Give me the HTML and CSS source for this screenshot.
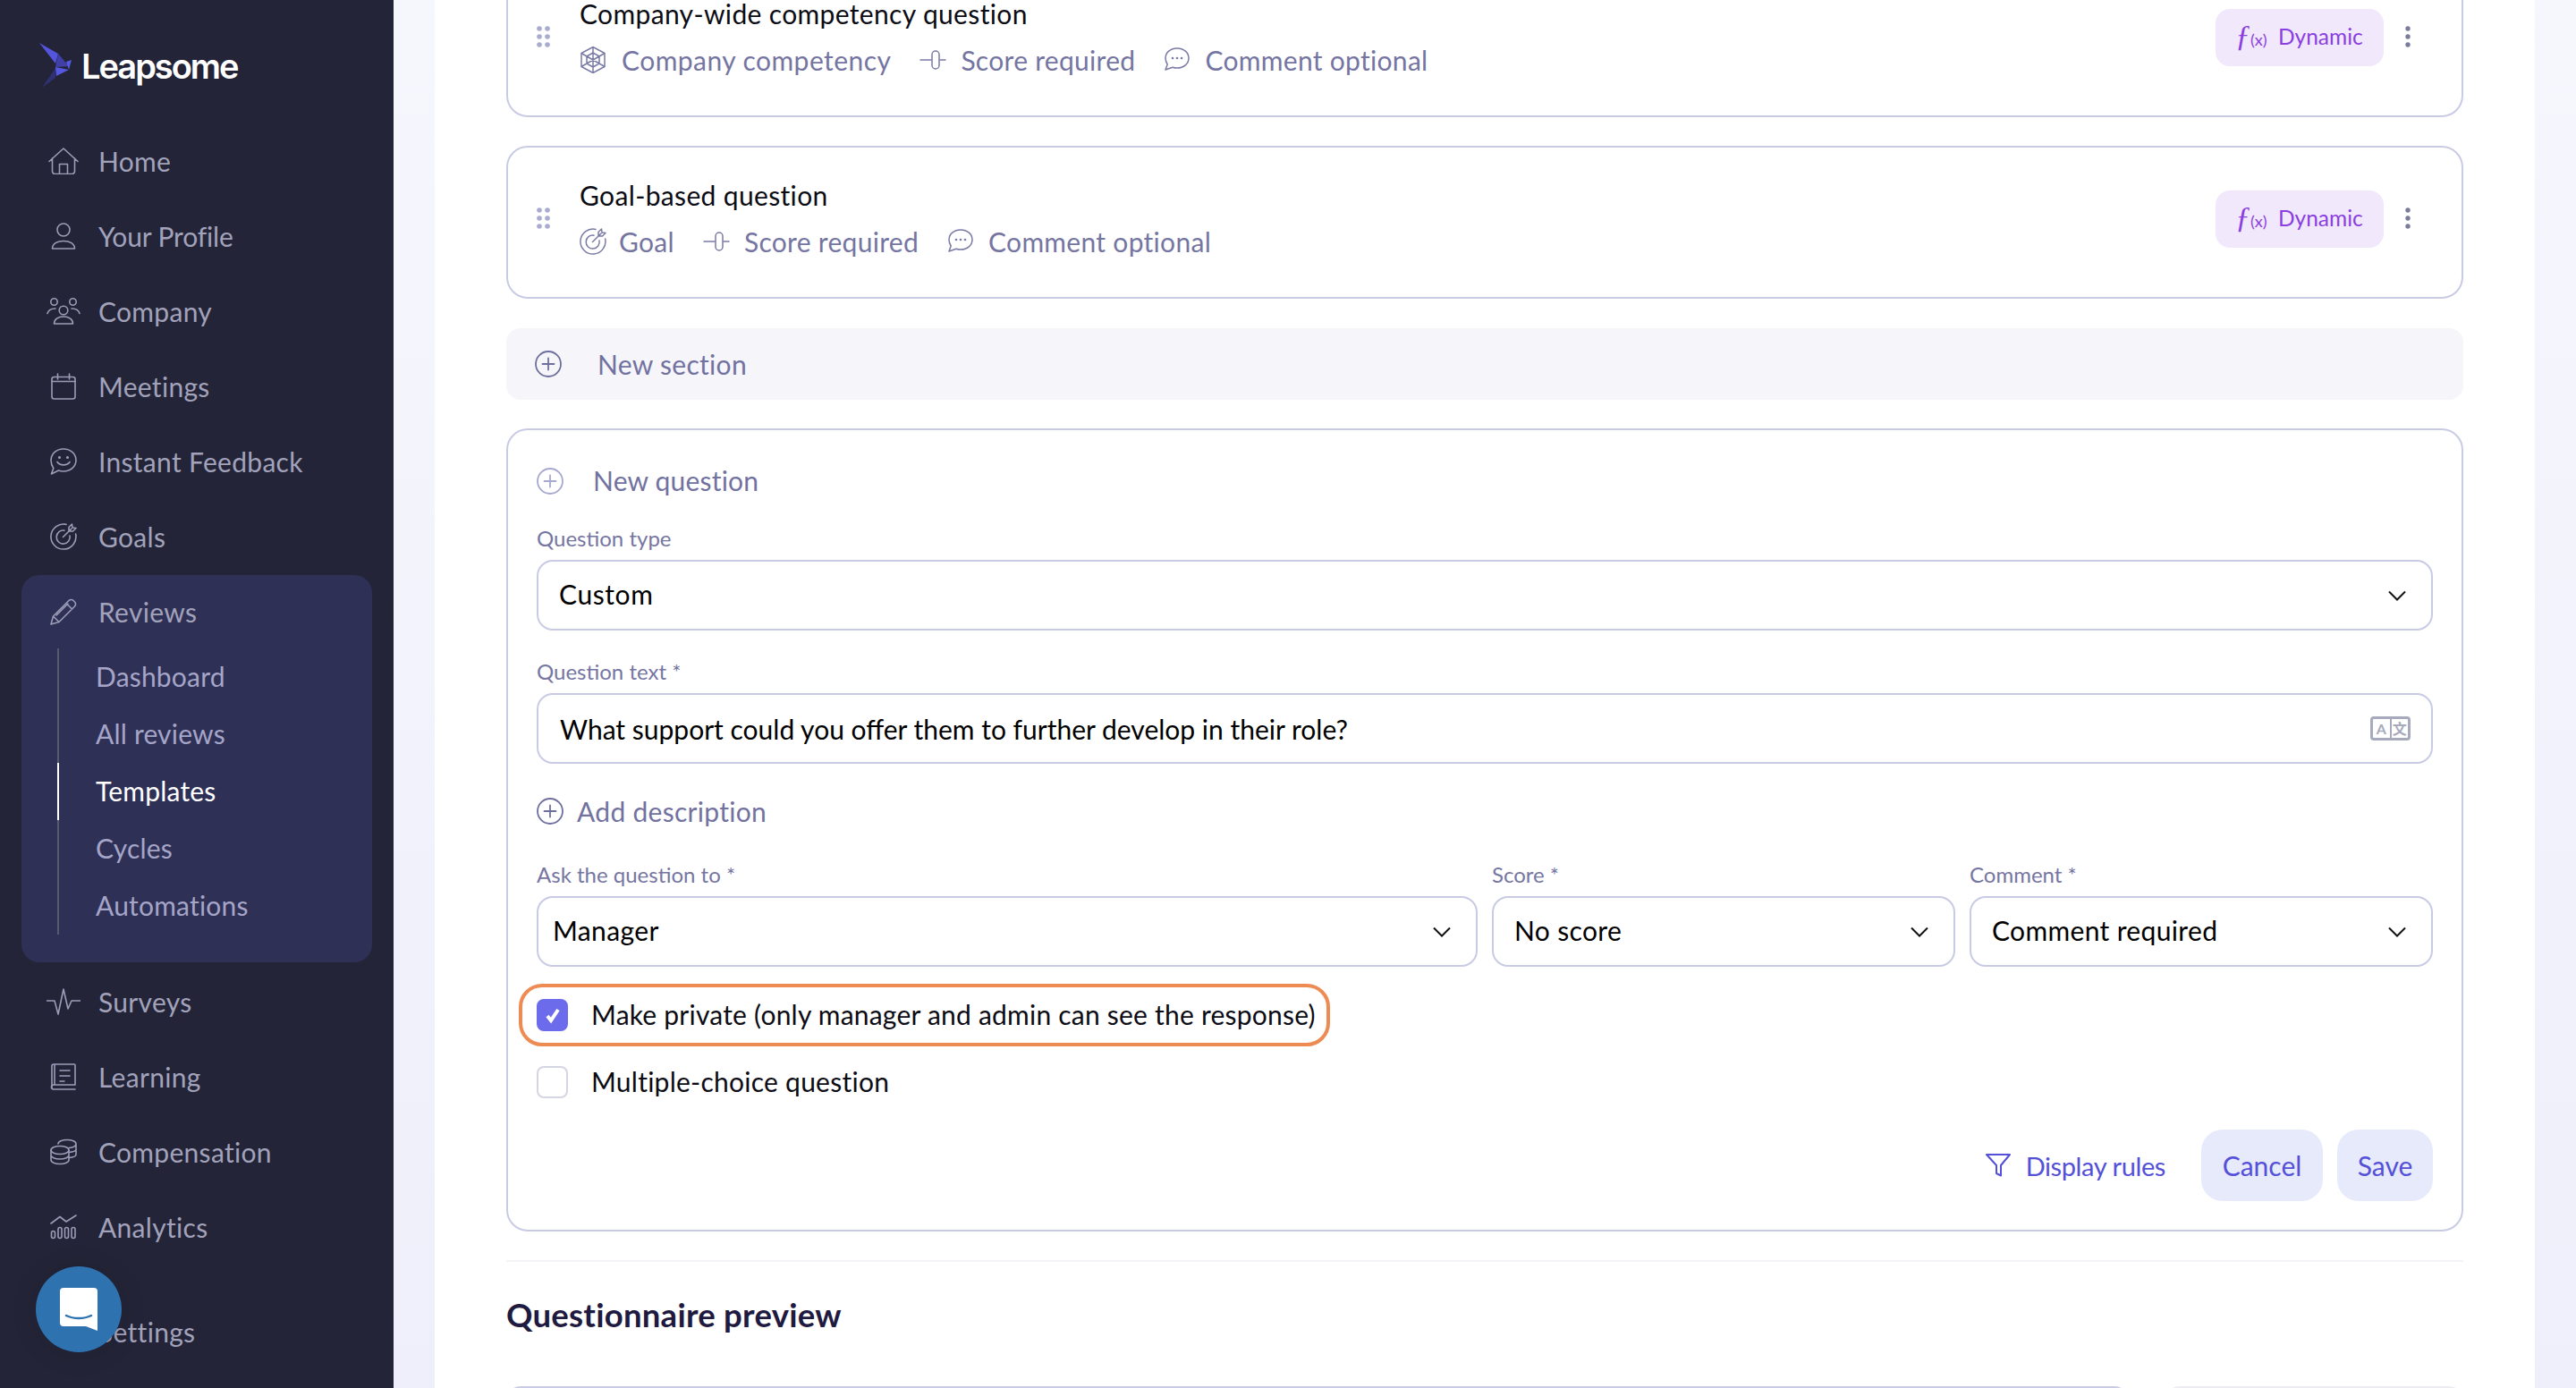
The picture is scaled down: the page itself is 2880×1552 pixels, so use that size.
FILE: index.html
```html
<!DOCTYPE html>
<html lang="en">
<head>
<meta charset="utf-8">
<title>Leapsome</title>
<link rel="stylesheet" href="styles.css">
</head>
<body>
<svg class="defs" width="0" height="0" aria-hidden="true">
  <symbol id="i-home" viewBox="0 0 34 30"><path d="M1 15.500 17 1l16 14.500M4.500 12v14.500a3 3 0 0 0 3 3h19a3 3 0 0 0 3-3V12M12.500 29V18.500h9V29"/></symbol>
  <symbol id="i-user" viewBox="0 0 30 30"><circle cx="15" cy="8" r="7"/><path d="M2.500 29c0-5.500 5.500-8.500 12.500-8.500s12.500 3 12.500 8.500z"/></symbol>
  <symbol id="i-team" viewBox="0 0 38 30"><circle cx="19" cy="14" r="4.800"/><circle cx="8.500" cy="4.500" r="3.700"/><circle cx="29.500" cy="4.500" r="3.700"/><path d="M8.500 29c0-5 4.500-8 10.500-8s10.500 3 10.500 8zM1 17.500c1-3.500 4.500-5.500 9-5.500M37 17.500c-1-3.500-4.500-5.500-9-5.500"/></symbol>
  <symbol id="i-cal" viewBox="0 0 30 30"><rect x="2" y="4.500" width="26" height="24.500" rx="2.500"/><path d="M2 9.500h26M8.500 1v6M21.500 1v6"/></symbol>
  <symbol id="i-chat" viewBox="0 0 30 30"><path d="M15 1c8 0 14 5.500 14 12.500S23 26 15 26c-2 0-4-.3-5.500-1L1.500 29l2.300-6.500C2 20 1 17 1 13.500 1 6.500 7 1 15 1z"/><circle cx="10.500" cy="10.500" r=".8"/><circle cx="19.500" cy="10.500" r=".8"/><path d="M8 15.500c3 4.500 11 4.500 14 0"/></symbol>
  <symbol id="i-bubble" viewBox="0 0 30 30"><path d="M15 2c7.500 0 13 4.800 13 11s-5.500 11-13 11c-1.800 0-3.500-.3-5-.8L2 26l2.200-6C3 18 2 15.700 2 13 2 6.800 7.500 2 15 2z"/><circle cx="10" cy="13" r=".6"/><circle cx="15" cy="13" r=".6"/><circle cx="20" cy="13" r=".6"/></symbol>
  <symbol id="i-goal" viewBox="0 0 30 30"><path d="M18 1.400A14 14 0 1 0 28.600 12"/><path d="M16 8.200A7.500 7.500 0 1 0 22 14"/><path d="M14.500 15.500 24 6M21 9V4.500L24.500 1l.5 4 4 .5L25.500 9z"/></symbol>
  <symbol id="i-pencil" viewBox="0 0 30 30"><path d="M1 29l2.500-9L21 2.500a3.500 3.500 0 0 1 5 0l1.500 1.500a3.500 3.500 0 0 1 0 5L10 26.500zM3.500 20l6.500 6.500M18 5.500 24.500 12M7 19 20 6"/></symbol>
  <symbol id="i-pulse" viewBox="0 0 38 30"><path d="M0 14h9l4 15 6-28 5 22 4-9h10"/></symbol>
  <symbol id="i-book" viewBox="0 0 30 30"><path d="M5 24V1h22a1 1 0 0 1 1 1v22zM5 24H4a2.500 2.500 0 0 0 0 5h24M2 27V3a2 2 0 0 1 2-2h1M11 8h11M11 14h11M11 20h5"/></symbol>
  <symbol id="i-coins" viewBox="0 0 30 30"><ellipse cx="11" cy="13" rx="10" ry="4.500"/><path d="M1 13v11c0 2.500 4.500 4.500 10 4.500s10-2 10-4.500V13M1 18.500c0 2.500 4.500 4.500 10 4.500s10-2 10-4.500"/><path d="M9 6c0-2.500 4.500-4.500 10-4.500S29 3.500 29 6s-3 4-8 4.500M29 6v12c0 1.800-3 3-8 3.500M29 12c0 1.800-3 3-8 3.500"/></symbol>
  <symbol id="i-chart" viewBox="0 0 30 28"><path d="M1 10 11 2.500 18 8 29 1"/><rect x="1.500" y="18.500" width="4" height="8" rx="2"/><rect x="9" y="14.500" width="4" height="12" rx="2"/><rect x="16.500" y="14.500" width="4" height="12" rx="2"/><rect x="24" y="14.500" width="4" height="12" rx="2"/></symbol>
  <symbol id="i-gear" viewBox="0 0 30 30"><circle cx="15" cy="15" r="5"/><circle cx="15" cy="15" r="12"/></symbol>
  <symbol id="i-web" viewBox="0 0 30 30"><path d="M15 .5 28 7.500v15L15 29.500 2 22.500v-15zM15 7 22 11v8l-7 4-7-4v-8zM15 .5v29M2 7.500l26 15M28 7.500 2 22.500"/></symbol>
  <symbol id="i-score" viewBox="0 0 30 30"><path d="M1 15h12M23 15h6"/><rect x="14" y="5" width="8" height="20" rx="4"/></symbol>
  <symbol id="i-plus" viewBox="0 0 30 30"><circle cx="15" cy="15" r="14"/><path d="M15 8.500v13M8.500 15h13"/></symbol>
  <symbol id="i-chev" viewBox="0 0 20 12"><path d="M1 1.500 10 10.500 19 1.500"/></symbol>
  <symbol id="i-filter" viewBox="0 0 28 26"><path d="M1 1h26L17 13v11.500l-5-2.500v-9z"/></symbol>
</svg>

<div class="app">
  <aside class="sidebar">
    <header class="brand">
      <svg class="bird" viewBox="0 0 36 50" aria-hidden="true">
        <polygon points="0,0 21,12 18,23" fill="#5356dc"/>
        <polygon points="21,12 33,26 18,27" fill="#4040a8"/>
        <polygon points="30,21 36,19 33,30" fill="#5558e0"/>
        <polygon points="18,27 33,30 19,37" fill="#5558e0"/>
        <polygon points="18,28 18,39 3,50" fill="#303074"/>
      </svg>
      <span class="brand-name">Leapsome</span>
    </header>
    <nav class="nav">
      <a class="nav-item"><span class="nav-icon"><svg class="ic home"><use href="#i-home"/></svg></span>Home</a>
      <a class="nav-item profile"><span class="nav-icon"><svg class="ic"><use href="#i-user"/></svg></span>Your Profile</a>
      <a class="nav-item"><span class="nav-icon"><svg class="ic wide"><use href="#i-team"/></svg></span>Company</a>
      <a class="nav-item"><span class="nav-icon"><svg class="ic"><use href="#i-cal"/></svg></span>Meetings</a>
      <a class="nav-item"><span class="nav-icon"><svg class="ic"><use href="#i-chat"/></svg></span>Instant Feedback</a>
      <a class="nav-item"><span class="nav-icon"><svg class="ic"><use href="#i-goal"/></svg></span>Goals</a>
      <div class="nav-group">
        <a class="nav-item"><span class="nav-icon"><svg class="ic"><use href="#i-pencil"/></svg></span>Reviews</a>
        <ul class="sub-nav">
          <li>Dashboard</li>
          <li>All reviews</li>
          <li class="active">Templates</li>
          <li>Cycles</li>
          <li>Automations</li>
        </ul>
      </div>
      <a class="nav-item"><span class="nav-icon"><svg class="ic wide"><use href="#i-pulse"/></svg></span>Surveys</a>
      <a class="nav-item"><span class="nav-icon"><svg class="ic"><use href="#i-book"/></svg></span>Learning</a>
      <a class="nav-item"><span class="nav-icon"><svg class="ic"><use href="#i-coins"/></svg></span>Compensation</a>
      <a class="nav-item"><span class="nav-icon"><svg class="ic"><use href="#i-chart"/></svg></span>Analytics</a>
      <a class="nav-item settings"><span class="nav-icon"><svg class="ic"><use href="#i-gear"/></svg></span>Settings</a>
    </nav>
    <button class="chat-launcher" aria-label="Chat">
      <svg viewBox="0 0 42 48" width="42" height="48" aria-hidden="true">
        <path fill="#fff" d="M4 0h34a4 4 0 0 1 4 4v44l-13-5H4a4 4 0 0 1-4-4V4a4 4 0 0 1 4-4z"/>
        <path fill="none" stroke="#2f72b0" stroke-width="2.500" stroke-linecap="round" d="M7 31c8 4 20 4 28 0"/>
      </svg>
    </button>
  </aside>

  <main class="stage">
    <div class="panel">
      <article class="card q-card">
        <svg class="grip" viewBox="0 0 15 24" aria-hidden="true"><circle cx="3" cy="3" r="2.800"/><circle cx="12" cy="3" r="2.800"/><circle cx="3" cy="12" r="2.800"/><circle cx="12" cy="12" r="2.800"/><circle cx="3" cy="21" r="2.800"/><circle cx="12" cy="21" r="2.800"/></svg>
        <div class="q-body">
          <h3 class="q-title">Company-wide competency question</h3>
          <div class="q-meta">
            <span class="meta competency"><svg class="ic meta-ic"><use href="#i-web"/></svg>Company competency</span>
            <span class="meta"><svg class="ic meta-ic"><use href="#i-score"/></svg>Score required</span>
            <span class="meta"><svg class="ic meta-ic"><use href="#i-bubble"/></svg>Comment optional</span>
          </div>
        </div>
        <span class="badge"><span class="fx"><i>ƒ</i><small>(x)</small></span>Dynamic</span>
        <svg class="kebab" viewBox="0 0 6 24" aria-hidden="true"><circle cx="3" cy="3" r="2.700"/><circle cx="3" cy="12" r="2.700"/><circle cx="3" cy="21" r="2.700"/></svg>
      </article>

      <article class="card q-card">
        <svg class="grip" viewBox="0 0 15 24" aria-hidden="true"><circle cx="3" cy="3" r="2.800"/><circle cx="12" cy="3" r="2.800"/><circle cx="3" cy="12" r="2.800"/><circle cx="12" cy="12" r="2.800"/><circle cx="3" cy="21" r="2.800"/><circle cx="12" cy="21" r="2.800"/></svg>
        <div class="q-body">
          <h3 class="q-title">Goal-based question</h3>
          <div class="q-meta">
            <span class="meta goal"><svg class="ic meta-ic"><use href="#i-goal"/></svg>Goal</span>
            <span class="meta"><svg class="ic meta-ic"><use href="#i-score"/></svg>Score required</span>
            <span class="meta"><svg class="ic meta-ic"><use href="#i-bubble"/></svg>Comment optional</span>
          </div>
        </div>
        <span class="badge"><span class="fx"><i>ƒ</i><small>(x)</small></span>Dynamic</span>
        <svg class="kebab" viewBox="0 0 6 24" aria-hidden="true"><circle cx="3" cy="3" r="2.700"/><circle cx="3" cy="12" r="2.700"/><circle cx="3" cy="21" r="2.700"/></svg>
      </article>

      <div class="new-section"><svg class="ic plus"><use href="#i-plus"/></svg>New section</div>

      <section class="card form-card">
        <div class="new-question"><svg class="ic plus soft"><use href="#i-plus"/></svg><span class="lift">New question</span></div>

        <div class="field first">
          <label class="label">Question type</label>
          <div class="control custom"><span>Custom</span><svg class="chev"><use href="#i-chev"/></svg></div>
        </div>

        <div class="field second">
          <label class="label">Question text *</label>
          <div class="control text-input"><span>What support could you offer them to further develop in their role?</span>
            <span class="translate"><b>A</b><b class="cjk">文</b></span>
          </div>
        </div>

        <div class="add-description"><svg class="ic plus"><use href="#i-plus"/></svg>Add description</div>

        <div class="field-row">
          <div class="field">
            <label class="label">Ask the question to *</label>
            <div class="control tight"><span>Manager</span><svg class="chev"><use href="#i-chev"/></svg></div>
          </div>
          <div class="field">
            <label class="label">Score *</label>
            <div class="control"><span>No score</span><svg class="chev"><use href="#i-chev"/></svg></div>
          </div>
          <div class="field">
            <label class="label">Comment *</label>
            <div class="control"><span>Comment required</span><svg class="chev"><use href="#i-chev"/></svg></div>
          </div>
        </div>

        <div class="highlight">
          <span class="checkbox checked"><svg viewBox="0 0 20 20" width="20" height="20" aria-hidden="true"><path d="M4 11l4 5 8-12"/></svg></span>
          <span class="lift private">Make private (only manager and admin can see the response)</span>
        </div>
        <div class="check-row">
          <span class="checkbox"></span>
          <span class="lift">Multiple-choice question</span>
        </div>

        <div class="form-actions">
          <span class="rules"><svg class="filter"><use href="#i-filter"/></svg>Display rules</span>
          <button class="btn cancel">Cancel</button>
          <button class="btn save">Save</button>
        </div>
      </section>

      <hr class="divider">
      <h2 class="preview-title">Questionnaire preview</h2>
      <div class="preview-row">
        <div class="preview-main"></div>
        <div class="preview-side"></div>
      </div>
    </div>
  </main>
</div>
</body>
</html>
```

FILE: styles.css
```css
* { box-sizing: border-box; }
html, body { margin: 0; height: 100%; }
body {
  font-family: "Lato", "Noto Sans", sans-serif;
  font-size: 30px;
  color: #0c0c14;
  overflow: hidden;
  background: #fff;
}
.defs { position: absolute; }
.app { display: flex; height: 100vh; overflow: hidden; }
.lift { padding-bottom: 3px; }

/* icons */
.ic {
  width: 30px;
  height: 30px;
  fill: none;
  stroke: #9c9cb8;
  stroke-width: 1.600;
  stroke-linecap: round;
  stroke-linejoin: round;
  overflow: visible;
  flex: none;
}
.ic.home { width: 34px; }
.ic.wide { width: 38px; }

/* sidebar */
.sidebar {
  width: 440px;
  flex: none;
  background: #232437;
  position: relative;
  height: 100%;
}
.brand {
  height: 139px;
  padding: 48px 0 0 44px;
  display: flex;
  align-items: flex-start;
  gap: 11px;
}
.bird { width: 36px; height: 50px; flex: none; }
.brand-name {
  font-family: "Inter", sans-serif;
  font-weight: 600;
  font-size: 38px;
  line-height: 46px;
  letter-spacing: -2px;
  color: #fff;
  margin-top: 3px;
}
.nav { display: flex; flex-direction: column; }
.nav-item {
  display: flex;
  align-items: center;
  height: 84px;
  padding: 0 0 3px 52px;
  color: #a2a2bb;
  font-size: 30px;
  letter-spacing: .3px;
}
.nav-item.profile { letter-spacing: -.15px; }
.nav-icon { width: 38px; margin-right: 20px; display: flex; justify-content: center; }
.nav-group {
  margin: 0 24px 3px;
  background: #2f3056;
  border-radius: 20px;
  padding-bottom: 31px;
}
.nav-group .nav-item { padding-left: 28px; }
.sub-nav {
  list-style: none;
  margin: -2px 0 0 40px;
  padding: 0;
}
.sub-nav li {
  height: 64px;
  display: flex;
  align-items: center;
  padding: 0 0 3px 41px;
  border-left: 2px solid #565a70;
  color: #a5a5c8;
  font-size: 30px;
  letter-spacing: .2px;
}
.sub-nav li.active { color: #fff; border-left-color: #fff; }
.settings { margin-top: 33px; }
.chat-launcher {
  position: absolute;
  left: 40px;
  top: 1416px;
  width: 96px;
  height: 96px;
  border: 0;
  border-radius: 50%;
  background: #2f72b0;
  display: flex;
  align-items: center;
  justify-content: center;
  padding: 0;
  box-shadow: 0 2px 30px rgba(0, 0, 0, .12);
}

/* stage */
.stage {
  flex: 1;
  padding: 0 46px;
  background: linear-gradient(#f6f6fd, #efeffb);
  min-width: 0;
  height: 100%;
}
.panel {
  background: #fff;
  height: 100%;
  padding: 0 80px;
  overflow: hidden;
}
.card {
  border: 2px solid #c9cbe4;
  border-radius: 24px;
  background: #fff;
}
.q-card {
  height: 171px;
  margin-bottom: 32px;
  display: flex;
  align-items: flex-start;
  padding: 38px 57px 0 32px;
}
.q-card:first-child { margin-top: -40px; }
.grip { width: 15px; height: 24px; fill: #a9abd0; margin-top: 29px; flex: none; }
.q-body { flex: 1; margin-left: 33px; }
.q-title {
  margin: 0;
  font-weight: 400;
  font-size: 30px;
  line-height: 30px;
  letter-spacing: .35px;
}
.q-meta { display: flex; gap: 32px; margin-top: 17px; }
.meta {
  display: flex;
  align-items: center;
  gap: 16px;
  line-height: 40px;
  font-size: 30px;
  letter-spacing: .3px;
  color: #7575a2;
}
.meta.competency { gap: 17px; letter-spacing: .45px; }
.meta.goal { gap: 14px; }
.meta-ic { stroke: #7a7aa6; stroke-width: 1.500; }
.badge {
  width: 188px;
  height: 64px;
  margin: 10px 24px 0 0;
  border-radius: 16px;
  background: #f1e8fb;
  color: #8a3fe0;
  display: flex;
  align-items: center;
  padding: 0 0 4px 22px;
  font-size: 24.500px;
  flex: none;
}
.fx { width: 48px; flex: none; white-space: nowrap; }
.fx i { font-family: "Liberation Serif", serif; font-size: 34px; }
.fx small { font-size: 18px; }
.kebab { width: 6px; height: 24px; fill: #7b7b9e; margin-top: 29px; flex: none; }

.new-section {
  height: 80px;
  margin: 33px 0 32px;
  padding-left: 32px;
  display: flex;
  align-items: center;
  gap: 40px;
  background: #f5f5fa;
  border-radius: 16px;
  color: #7272a0;
  letter-spacing: .3px;
}
.plus { stroke: #6f6f9e; stroke-width: 1.800; }
.plus.soft { stroke: #a6a8d0; }

/* form */
.form-card { height: 898px; padding: 37px 32px 0; }
.new-question {
  height: 40px;
  display: flex;
  align-items: center;
  gap: 33px;
  color: #7272a0;
  letter-spacing: .2px;
}
.label {
  display: block;
  font-size: 24px;
  line-height: 32px;
  color: #7676a2;
  padding-bottom: 3px;
  margin-bottom: 5px;
}
.field.first { margin-top: 28px; }
.field.second { margin-top: 30px; }
.control {
  height: 79px;
  border: 2px solid #c9cbe4;
  border-radius: 18px;
  display: flex;
  align-items: center;
  justify-content: space-between;
  padding: 0 28px 0 23px;
  color: #000;
  font-size: 30px;
  letter-spacing: .35px;
}
.control > span:first-child { padding-bottom: 3px; }
.control.custom { letter-spacing: .6px; }
.control.text-input { padding-left: 24px; letter-spacing: 0; }
.control.text-input > span:first-child { padding-bottom: 0; }
.control.tight { padding-left: 16px; letter-spacing: .4px; }
.chev {
  width: 20px;
  height: 12px;
  fill: none;
  stroke: #111;
  stroke-width: 2;
  flex: none;
}
.translate {
  display: flex;
  width: 45px;
  height: 27px;
  border: 3px solid #a6aabc;
  border-radius: 4px;
  margin-right: -5px;
  color: #a6aabc;
}
.translate b {
  flex: 1;
  font-size: 16px;
  line-height: 21px;
  text-align: center;
}
.translate b + b { border-left: 2px solid #a6aabc; }
.cjk { font-family: "Noto Sans CJK SC", sans-serif; }
.add-description {
  height: 40px;
  margin-top: 33px;
  display: flex;
  align-items: center;
  gap: 15px;
  color: #7272a0;
  letter-spacing: .3px;
}
.field-row {
  display: grid;
  grid-template-columns: 1052fr 518fr 518fr;
  gap: 16px;
  margin-top: 35px;
}
.highlight {
  width: fit-content;
  height: 70px;
  margin: 19px 0 0 -20px;
  padding: 0 12px 0 16px;
  border: 4px solid #ee8b52;
  border-radius: 26px;
  display: flex;
  align-items: center;
  gap: 26px;
}
.private { letter-spacing: .22px; }
.check-row {
  display: flex;
  align-items: center;
  gap: 26px;
  height: 36px;
  margin-top: 22px;
  letter-spacing: .25px;
}
.checkbox {
  width: 35px;
  height: 36px;
  flex: none;
  border: 2px solid #d5d6e3;
  border-radius: 8px;
  display: flex;
  align-items: center;
  justify-content: center;
}
.checkbox.checked { background: #6b6bec; border-color: #6b6bec; }
.checkbox svg { fill: none; stroke: #fff; stroke-width: 4; }
.form-actions {
  display: flex;
  align-items: center;
  justify-content: flex-end;
  margin-top: 35px;
  color: #5550d8;
}
.rules {
  display: flex;
  align-items: center;
  gap: 17px;
  margin-right: 40px;
  font-size: 29px;
  letter-spacing: -.4px;
}
.filter {
  width: 28px;
  height: 26px;
  fill: none;
  stroke: #5550d8;
  stroke-width: 2;
  stroke-linejoin: round;
}
.btn {
  height: 80px;
  border: 0;
  border-radius: 24px;
  background: #e6eafb;
  color: #5550d8;
  font: inherit;
}
.cancel { width: 136px; margin-right: 16px; }
.save { width: 107px; }

.divider {
  border: 0;
  height: 2px;
  background: #f4f4f8;
  margin: 32px 0 0;
}
.preview-title {
  margin: 34px 0 0;
  font-size: 36.500px;
  line-height: 50px;
  font-weight: 700;
  color: #1f1a40;
  letter-spacing: .25px;
}
.preview-row {
  display: flex;
  gap: 41px;
  margin-top: 55px;
}
.preview-main {
  flex: 1;
  height: 100px;
  border: 2px solid #c9cbe4;
  border-radius: 16px;
}
.preview-side {
  width: 333px;
  height: 100px;
  border: 2px solid #ececf3;
  border-radius: 16px;
}
```
